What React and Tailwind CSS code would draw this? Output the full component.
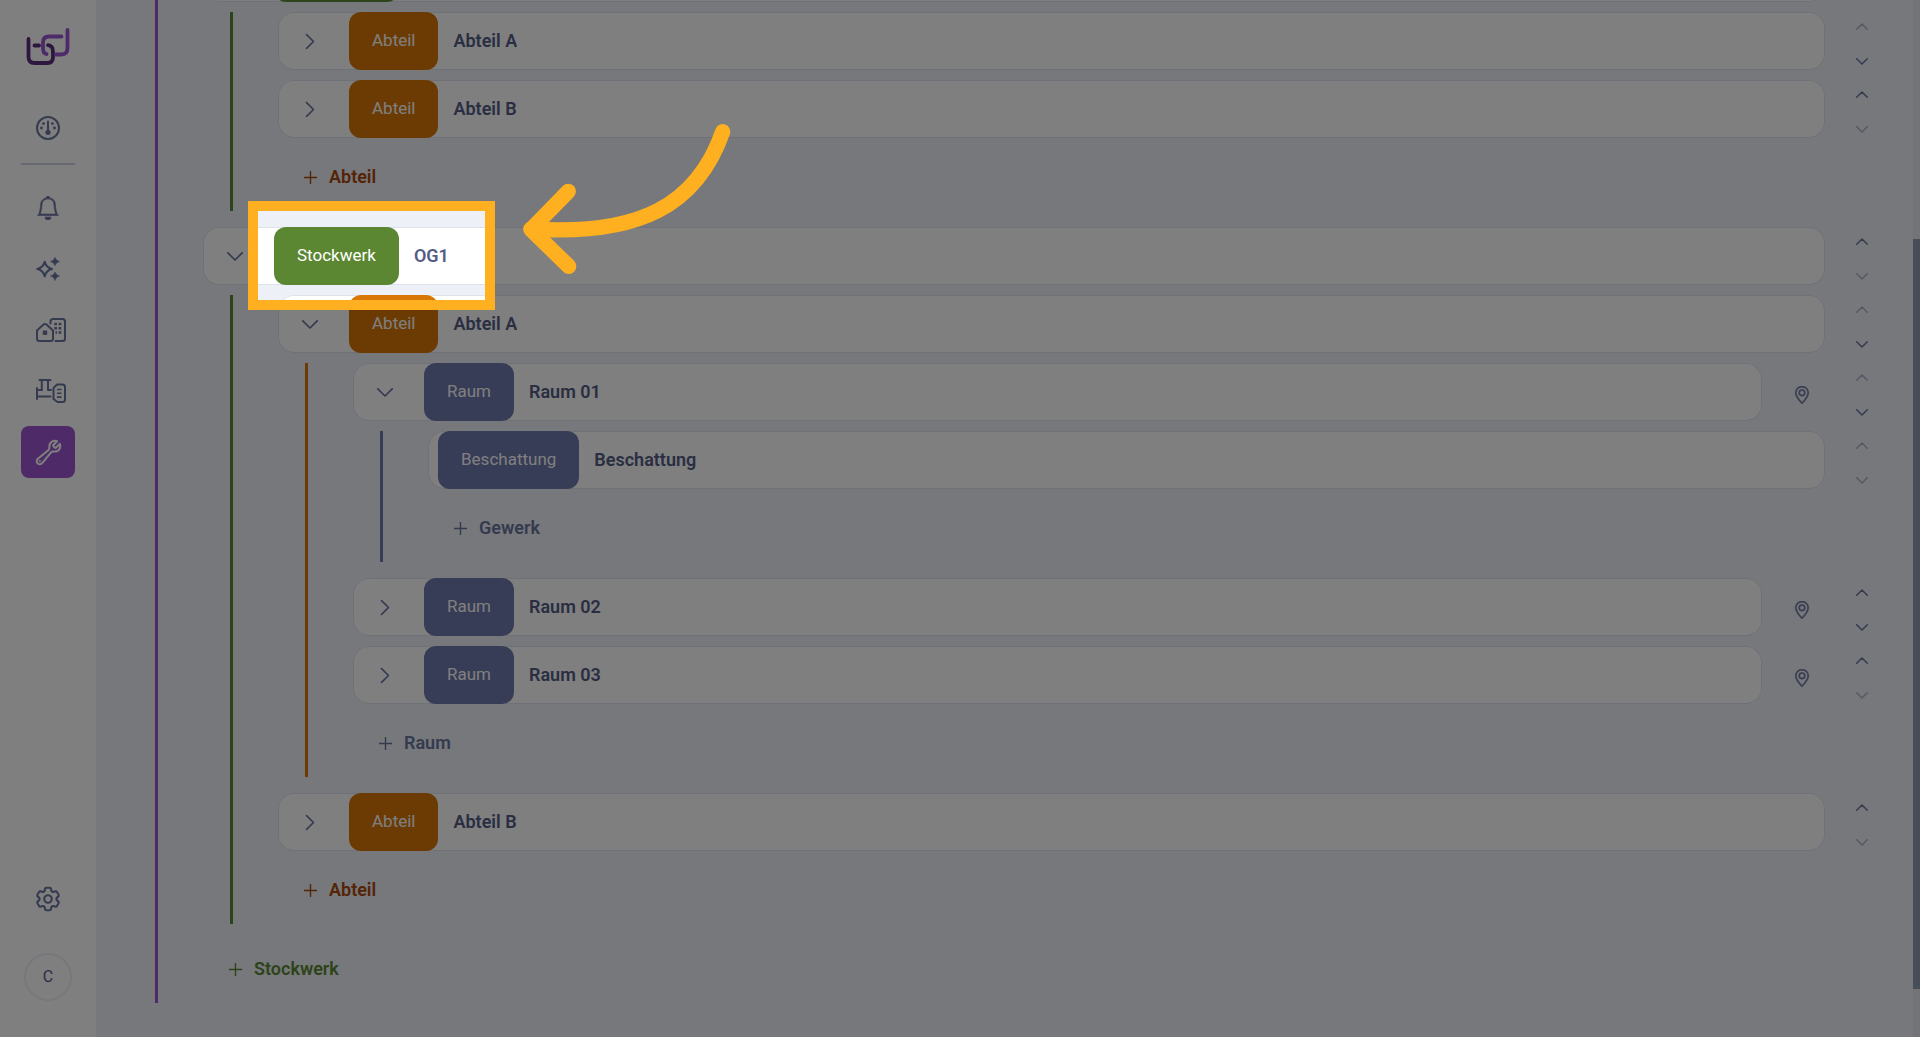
import { useState } from 'react';
import clsx from 'clsx';
import { BsBell, BsGeoAlt } from 'react-icons/bs';
import { HiOutlineWrench, HiOutlineCog6Tooth } from 'react-icons/hi2';

const KINDS = {
  building: { line: 'border-[#9d56d0]', add: 'text-[#5b8632]' },
  floor: { label: 'Stockwerk', chip: 'bg-[#5b8632]', line: 'border-[#5b8632]', add: 'text-[#a8480c]' },
  section: { label: 'Abteil', chip: 'bg-[#d97706]', line: 'border-[#d97706]', add: 'text-[#6b769f]' },
  room: { label: 'Raum', chip: 'bg-[#6f78ae]', line: 'border-[#6f78ae]', add: 'text-[#6b769f]' },
  trade: { label: 'Beschattung', chip: 'bg-[#6f78ae]' }
};

const building = {
  id: 'b',
  kind: 'building',
  addLabel: 'Stockwerk',
  children: [
    {
      id: 'eg',
      kind: 'floor',
      name: 'EG',
      open: true,
      down: true,
      addLabel: 'Abteil',
      children: [
        { id: 'eg-a', kind: 'section', name: 'Abteil A', down: true },
        { id: 'eg-b', kind: 'section', name: 'Abteil B', up: true }
      ]
    },
    {
      id: 'og1',
      kind: 'floor',
      name: 'OG1',
      open: true,
      up: true,
      addLabel: 'Abteil',
      children: [
        {
          id: 'og1-a',
          kind: 'section',
          name: 'Abteil A',
          open: true,
          down: true,
          addLabel: 'Raum',
          children: [
            {
              id: 'r1',
              kind: 'room',
              name: 'Raum 01',
              open: true,
              down: true,
              addLabel: 'Gewerk',
              children: [{ id: 't1', kind: 'trade', name: 'Beschattung' }]
            },
            { id: 'r2', kind: 'room', name: 'Raum 02', up: true, down: true },
            { id: 'r3', kind: 'room', name: 'Raum 03', up: true }
          ]
        },
        { id: 'og1-b', kind: 'section', name: 'Abteil B', up: true }
      ]
    }
  ]
};

function Logo() {
  return (
    <svg width="44" height="38" viewBox="0 0 44 38" fill="none" strokeWidth="3.8" strokeLinecap="round">
      <path d="M2.500 11V29Q2.500 35 8.500 35H21.500Q27 35 27 29V24Q27 17.500 22 17.200" stroke="#5d2f7c" />
      <path d="M8.500 17.500H13" stroke="#5d2f7c" />
      <path d="M35.500 8.500H23Q17 8.500 17 14.500V20Q17 25.500 20.500 26" stroke="#9d56d0" />
      <path d="M41.500 2V20Q41.500 26.500 35.500 26.500H30" stroke="#9d56d0" />
    </svg>
  );
}

function GaugeIcon() {
  return (
    <svg width="24" height="24" viewBox="0 0 24 24" fill="none">
      <circle cx="12" cy="12" r="11" stroke="currentColor" strokeWidth="2" />
      <path d="M12 5.500V16" stroke="currentColor" strokeWidth="2" strokeLinecap="round" />
      <circle cx="12" cy="16.300" r="2.600" fill="currentColor" />
      <g fill="currentColor">
        <circle cx="7.600" cy="7.600" r="1.400" />
        <circle cx="16.400" cy="7.600" r="1.400" />
        <circle cx="5.500" cy="12" r="1.400" />
        <circle cx="18.500" cy="12" r="1.400" />
      </g>
    </svg>
  );
}

function SparklesIcon() {
  return (
    <svg width="24" height="24" viewBox="0 0 24 24">
      <path
        d="M8.700 4.800Q10.200 10.700 16 12Q10.200 13.300 8.700 19.200Q7.200 13.300 1.400 12Q7.200 10.700 8.700 4.800Z"
        fill="none"
        stroke="currentColor"
        strokeWidth="2.200"
        strokeLinejoin="round"
      />
      <g fill="currentColor" stroke="currentColor" strokeWidth="0.600" strokeLinejoin="round">
        <path d="M19 0.300Q19.900 3.700 23.500 4.500Q19.900 5.300 19 8.800Q18.100 5.300 14.500 4.500Q18.100 3.700 19 0.300Z" />
        <path d="M19 15Q19.900 18.200 23.500 19Q19.900 19.800 19 23.500Q18.100 19.800 14.500 19Q18.100 18.200 19 15Z" />
      </g>
    </svg>
  );
}

function BuildingsIcon() {
  return (
    <svg width="30" height="24" viewBox="0 0 30 24" fill="none">
      <g stroke="currentColor" strokeWidth="2" strokeLinecap="round" strokeLinejoin="round">
        <path d="M1 12.500L7.500 6.600Q9 5.300 10.500 6.600L17 12.500V20.500Q17 23 14.500 23H3.500Q1 23 1 20.500Z" />
        <path d="M14.500 5.500V3.500Q14.500 1 17 1H26.500Q29 1 29 3.500V20.500Q29 23 26.500 23H19.500" />
      </g>
      <rect x="6.800" y="12.500" width="4.400" height="4.400" fill="currentColor" />
      <path d="M18.300 6H21M22.600 6H25.300M18.300 10.200H21M22.600 10.200H25.300M19.500 14.500H21M22.600 14.500H25.300" stroke="currentColor" strokeWidth="2.400" />
    </svg>
  );
}

function DevicesIcon() {
  return (
    <svg width="30" height="24" viewBox="0 0 30 24" fill="none" stroke="currentColor" strokeWidth="2">
      <path d="M3.500 1H14.500M5.800 1V11M12 1V11M1 9V20M1 11H6M12 11H15M1 17.500H14.500" strokeLinecap="round" />
      <path d="M21 5.500H26.500Q29 5.500 29 8V20.500Q29 23 26.500 23H21.500L17.500 20V9Z" strokeLinejoin="round" />
      <path d="M21 10.500H25.500M21 14.300H25.500M21 18.100H25.500" strokeWidth="1.600" />
    </svg>
  );
}

function Chevron({ dir, small }) {
  const rotation = { up: 'rotate-180', right: '-rotate-90', down: '' }[dir];
  return (
    <svg
      className={rotation}
      width={small ? 12 : 16}
      height={small ? 7 : 9}
      viewBox={small ? '0 0 12 7' : '0 0 16 9'}
      fill="none"
      stroke="currentColor"
      strokeWidth={small ? 1.5 : 1.7}
      strokeLinecap="round"
      strokeLinejoin="round"
    >
      <path d={small ? 'M0.700 0.700L6 6L11.300 0.700' : 'M0.800 0.800L8 8L15.200 0.800'} />
    </svg>
  );
}

function NavButton({ label, active, wide, children }) {
  return (
    <button
      type="button"
      aria-label={label}
      className={clsx(
        'flex h-[52px] w-[54px] shrink-0 items-center rounded-lg',
        wide ? 'pl-[15px]' : 'justify-center',
        active ? 'bg-[#9d56d0] text-white' : 'text-[#6b769f]'
      )}
    >
      {children}
    </button>
  );
}

function Sidebar() {
  return (
    <aside className="flex w-24 shrink-0 flex-col items-center bg-white">
      <a href="#start" aria-label="Start" className="mt-7">
        <Logo />
      </a>
      <nav className="mt-9 flex flex-col gap-[9px]">
        <NavButton label="Dashboard"><GaugeIcon /></NavButton>
        <hr className="mb-2 border-t-2 border-[#ccd3df]" />
        <NavButton label="Meldungen"><BsBell size={24} strokeWidth={0.4} /></NavButton>
        <NavButton label="Assistent"><SparklesIcon /></NavButton>
        <NavButton label="Gebäude" wide><BuildingsIcon /></NavButton>
        <NavButton label="Geräte" wide><DevicesIcon /></NavButton>
        <NavButton label="Konfiguration" active><HiOutlineWrench size={29} strokeWidth={1.7} /></NavButton>
      </nav>
      <div className="mt-auto mb-9 flex flex-col items-center gap-7">
        <NavButton label="Einstellungen"><HiOutlineCog6Tooth size={30} strokeWidth={1.7} /></NavButton>
        <button type="button" className="size-12 rounded-full border-2 border-[#edf0f6] text-base text-[#545c84]">
          C
        </button>
      </div>
    </aside>
  );
}

function NodeRow({ node, open, onToggle }) {
  const kind = KINDS[node.kind];
  return (
    <div className="flex h-[58px]">
      <div className="flex min-w-0 flex-1 rounded-2xl bg-white ring-1 ring-[#dde3ee] ring-inset">
        {node.kind === 'trade' ? (
          <div className="w-[10px]" />
        ) : (
          <button
            type="button"
            onClick={onToggle}
            aria-label={`${node.name} umschalten`}
            className="flex w-[71px] items-center pl-6 text-[#6b769f]"
          >
            <Chevron dir={open ? 'down' : 'right'} />
          </button>
        )}
        <span className={clsx('flex items-center rounded-xl px-[23px] text-[17px] text-white', kind.chip)}>
          {kind.label}
        </span>
        <span className="flex items-center truncate pl-[15px] text-lg font-semibold text-[#545c84]">
          {node.name}
        </span>
      </div>
      {node.kind === 'room' && (
        <button type="button" aria-label={`${node.name} verorten`} className="flex w-[63px] items-center justify-center pt-[6px] pl-4 text-[#6b769f]">
          <BsGeoAlt size={18} strokeWidth={0.5} />
        </button>
      )}
      <div className="flex w-[74px] flex-col items-center justify-between pt-[11px] pb-[5px] text-[#6b769f]">
        <button type="button" aria-label="Nach oben" disabled={!node.up} className="disabled:opacity-50">
          <Chevron dir="up" small />
        </button>
        <button type="button" aria-label="Nach unten" disabled={!node.down} className="disabled:opacity-50">
          <Chevron dir="down" small />
        </button>
      </div>
    </div>
  );
}

function Branch({ node }) {
  const kind = KINDS[node.kind];
  return (
    <div className={clsx('mb-[6px] ml-[27px] flex flex-col gap-[10px] border-l-3 pb-[5px] pl-[45px]', kind.line)}>
      {node.children.map(child => (
        <TreeNode key={child.id} node={child} />
      ))}
      <button type="button" className={clsx('flex h-[58px] items-center gap-3 self-start pl-[26px] text-lg font-semibold', kind.add)}>
        <svg width="13" height="13" viewBox="0 0 13 13" stroke="currentColor" strokeWidth="1.400">
          <path d="M6.500 0V13M0 6.500H13" />
        </svg>
        {node.addLabel}
      </button>
    </div>
  );
}

function TreeNode({ node }) {
  const [open, setOpen] = useState(Boolean(node.open));
  return (
    <div className="flex flex-col gap-[10px]">
      <NodeRow node={node} open={open} onToggle={() => node.children && setOpen(!open)} />
      {open && node.children && <Branch node={node} />}
    </div>
  );
}

function Spotlight() {
  return (
    <>
      <div className="pointer-events-none absolute top-[201px] left-[248px] h-[109px] w-[247px] border-10 border-[#ffb020] shadow-[0_0_0_9999px_rgba(0,0,0,0.5)]" />
      <svg
        className="pointer-events-none absolute top-[110px] left-[510px]"
        width="230"
        height="180"
        viewBox="510 110 230 180"
        fill="none"
        stroke="#ffb020"
        strokeWidth="15.300"
        strokeLinecap="round"
        strokeLinejoin="round"
      >
        <path d="M722.700 131.700C697 205 640 236 531 229" />
        <path d="M568.300 191.300L531 229.500L568.700 266.300" />
      </svg>
    </>
  );
}

export default function App() {
  return (
    <div className="relative flex h-screen overflow-hidden bg-[#edf0f6] font-['Roboto',sans-serif]">
      <Sidebar />
      <main className="min-w-0 flex-1 pr-[14px] pl-8">
        <div className="-mt-14">
          <Branch node={building} />
        </div>
      </main>
      <div className="flex w-[7px] flex-col bg-[#e8e8f0]">
        <div className="h-[23%]" />
        <div className="h-[72.4%] bg-[#8e9ab3]" />
      </div>
      <Spotlight />
    </div>
  );
}
